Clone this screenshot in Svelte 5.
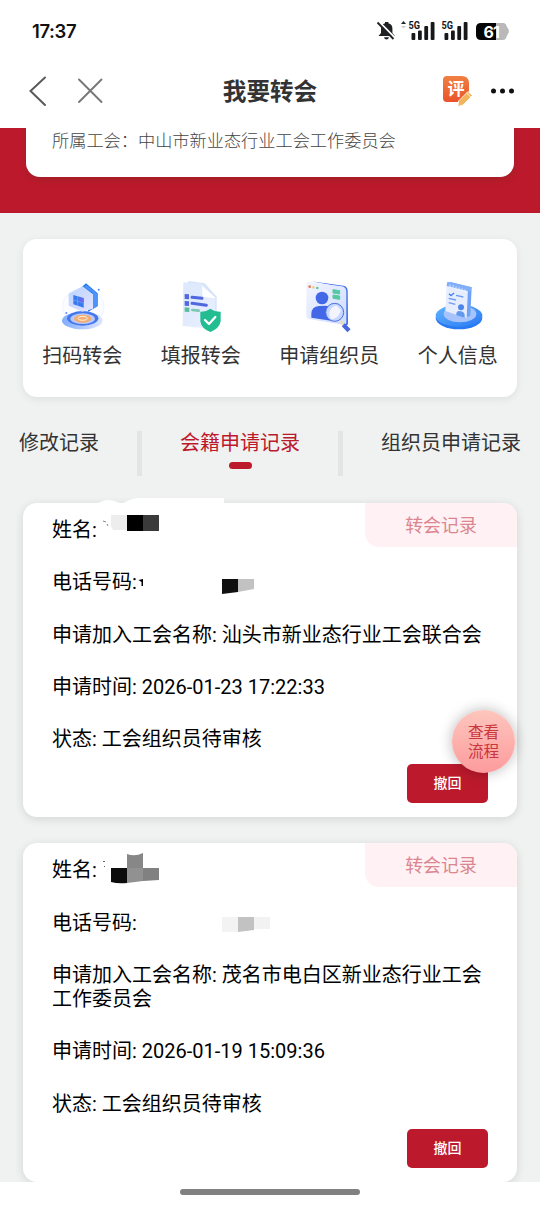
<script lang="ts">
	interface Field {
		label: string;
		value: string;
	}

	interface TransferRecord {
		id: number;
		fields: Field[];
	}

	const tabs = ['修改记录', '会籍申请记录', '组织员申请记录'];
	let activeTab = $state(1);

	const records: TransferRecord[] = [
		{
			id: 1,
			fields: [
				{ label: '姓名', value: '' },
				{ label: '电话号码', value: '' },
				{ label: '申请加入工会名称', value: '汕头市新业态行业工会联合会' },
				{ label: '申请时间', value: '2026-01-23 17:22:33' },
				{ label: '状态', value: '工会组织员待审核' }
			]
		},
		{
			id: 2,
			fields: [
				{ label: '姓名', value: '' },
				{ label: '电话号码', value: '' },
				{ label: '申请加入工会名称', value: '茂名市电白区新业态行业工会工作委员会' },
				{ label: '申请时间', value: '2026-01-19 15:09:36' },
				{ label: '状态', value: '工会组织员待审核' }
			]
		}
	];
</script>

<div class="screen">
	<header>
		<div class="status-bar">
			<span class="clock">17:37</span>
			<!-- mute, signal x2, battery -->
			<svg class="status-icons" width="136" height="24" viewBox="0 0 136 24">
				<path d="M2.500 17 5 14V9.500a5.500 5.500 0 0 1 4-5.200V3h3.400v1.300a5.500 5.500 0 0 1 4 5.200V14l2.500 3z" fill="#202124" />
				<path d="M8 18.300h5q-.5 2.200-2.500 2.200T8 18.300z" fill="#202124" />
				<path d="M2.500 2.300 18.800 18.800" stroke="#fff" stroke-width="2" />
				<path d="M1.500 3.500 17.500 20" stroke="#202124" stroke-width="1.800" />
				<path d="m25 5 2.500-3 2.500 3z" fill="#202124" />
				<path d="m25 7 2.500 2.500L30 7z" fill="#ccc" />
				<g fill="#17181a">
					<rect x="35.500" y="14" width="3.800" height="7" rx="1" />
					<rect x="42" y="11.500" width="3.800" height="9.500" rx="1" />
					<rect x="48.300" y="7" width="3.800" height="14" rx="1" />
					<rect x="54.700" y="3" width="3.800" height="18" rx="1" />
					<rect x="68.500" y="14" width="3.800" height="7" rx="1" />
					<rect x="75" y="11.500" width="3.800" height="9.500" rx="1" />
					<rect x="81.300" y="7" width="3.800" height="14" rx="1" />
					<rect x="87.700" y="3" width="3.800" height="18" rx="1" />
				</g>
				<g class="network">
					<text x="32.500" y="10" textLength="11.500" lengthAdjust="spacingAndGlyphs">5G</text>
					<text x="65.500" y="10" textLength="11.500" lengthAdjust="spacingAndGlyphs">5G</text>
				</g>
				<path d="M120 4h6.500q3.500 0 4 3.500l2 3v3l-2 3q-.5 3.500-4 3.500H120z" fill="#b9b9b9" />
				<path d="M105 4h15v17h-15q-5 0-5-5V9q0-5 5-5z" fill="#050505" />
				<path d="M120 4h6.500q3.500 0 4 3.500l2 3v3l-2 4q-.5 3.500-4 3.500H120z" fill="#b9b9b9" />
				<text class="charge" x="107.500" y="18.500">61</text>
			</svg>
		</div>
		<div class="nav-bar">
			<svg width="90" height="36" viewBox="0 0 90 36" fill="none" stroke-linecap="round">
				<path d="M25 4.500 10.500 18l14.500 14" stroke="#5a5a5a" stroke-width="2" />
				<path d="m59 6.500 22.500 22.500M81.500 6.500 59 29" stroke="#777" stroke-width="1.900" />
			</svg>
			<h1>我要转会</h1>
			<svg width="90" height="36" viewBox="0 0 90 36">
				<defs>
					<linearGradient id="rate" x1="0" y1="0" x2="0" y2="1">
						<stop offset="0" stop-color="#f08143" />
						<stop offset="1" stop-color="#eb512c" />
					</linearGradient>
				</defs>
				<path d="M16 3h15q6 0 7 6v12.500q0 7.500-7.500 7.500H16q-4 0-4-4V7q0-4 4-4z" fill="url(#rate)" />
				<text class="rate-glyph" x="16.500" y="21.500">评</text>
				<path d="m27.500 28 9.500-9.500 4.500 4-9.500 9.500-5 1.500z" fill="#f3b55b" stroke="#fff" stroke-width=".8" />
				<path d="m35.500 20 4.500 4" stroke="#fff3d5" stroke-width="1" />
				<g fill="#111">
					<circle cx="62.500" cy="18" r="2.500" />
					<circle cx="71.500" cy="18" r="2.500" />
					<circle cx="80.500" cy="18" r="2.500" />
				</g>
			</svg>
		</div>
	</header>

	<section class="banner">
		<div class="member-card">所属工会：中山市新业态行业工会工作委员会</div>
	</section>

	<main>
		<nav class="actions">
			<div class="action">
				<svg width="52" height="52" viewBox="78 48 156 156">
					<defs>
						<linearGradient id="disc" x1="0" x2="1">
							<stop offset="0" stop-color="#80adff" />
							<stop offset="1" stop-color="#dfe5ff" />
						</linearGradient>
						<linearGradient id="wall" x1="0" y1="0" x2="1" y2="1">
							<stop offset="0" stop-color="#b9d3ff" />
							<stop offset="1" stop-color="#e4e2ff" />
						</linearGradient>
					</defs>
					<ellipse cx="160" cy="125" rx="62" ry="55" fill="#fbfcff" stroke="#e7eeff" stroke-width="2" />
					<ellipse cx="157" cy="167" rx="61" ry="26" fill="url(#disc)" />
					<ellipse cx="158" cy="160" rx="47" ry="22" fill="#4377ee" />
					<ellipse cx="158" cy="161" rx="37" ry="16" fill="#b9c8fa" />
					<ellipse cx="158" cy="161" rx="26" ry="12" fill="#f2ae72" />
					<ellipse cx="158" cy="160" rx="14" ry="6" fill="none" stroke="#fff0dd" stroke-width="3" />
					<path d="m155 66 13-11 35 30v38l-28 17z" fill="#2979ee" />
					<path d="m170 61 33 26v36l-14 9V84l-26-19z" fill="#4c94f8" />
					<path d="m116 86 42-22 31 24v43l-32 9-41-18z" fill="url(#wall)" />
					<path d="m130 90 31 9v29l-31-10z" fill="#3979ee" />
					<path d="m143 94v29M130 105l31 9" stroke="#7daefa" stroke-width="2" />
					<path d="m148 97 13 4v12l-13-4z" fill="#6d69ed" />
					<circle cx="206" cy="74" r="3" fill="#4c8bf9" />
					<circle cx="109" cy="144" r="3" fill="#6c86fa" />
				</svg>
				<span>扫码转会</span>
			</div>
			<div class="action">
				<svg width="52" height="52" viewBox="435 48 156 156">
					<defs>
						<linearGradient id="sheet" x1="0" y1="0" x2="1" y2="1">
							<stop offset="0" stop-color="#dce8fc" />
							<stop offset="1" stop-color="#e9efff" />
						</linearGradient>
					</defs>
					<path d="m474 48 50 7 36 40v65l-86 20z" fill="#d4e3fa" />
					<path d="m460 52 56 4 40 43v93l-98-9z" fill="url(#sheet)" />
					<path d="m516 62 1 25q0 8 8 9l33 4z" fill="#fff" />
					<path d="m464 87 13 1v15l-13-1zm0 21 13 1v14l-13-1z" fill="#5369dc" />
					<path d="m464 127 14 1v13l-14-1z" fill="#58bd9d" />
					<path d="m486 97 30 3m-30 15 43 6" stroke="#5067df" stroke-width="9" stroke-linecap="round" />
					<path d="m487 135 19 2" stroke="#79c8ae" stroke-width="8" stroke-linecap="round" />
					<path d="M541 131q13 10 31 9v29q-4 22-31 32-27-10-30-32v-29q17 1 30-9z" fill="#22bd91" />
					<path d="m525 165 12 12 19-21" fill="none" stroke="#fff" stroke-width="7" stroke-linecap="round" stroke-linejoin="round" />
				</svg>
				<span>填报转会</span>
			</div>
			<div class="action">
				<svg width="52" height="52" viewBox="100 48 156 156">
					<defs>
						<linearGradient id="window" x1="0" y1="0" x2="1" y2="1">
							<stop offset="0" stop-color="#f3f4ff" />
							<stop offset="1" stop-color="#ccddff" />
						</linearGradient>
					</defs>
					<path d="m124 49 97 13q13 2 13 16l1 95q0 11-10 7l-10-4V66z" fill="#426ce9" />
					<path d="m116 51 100 13q13 2 14 15v94q0 8-9 6l-100-16q-11-2-11-12V58q0-8 6-7z" fill="url(#window)" />
					<circle cx="120" cy="65" r="4" fill="#e87958" />
					<circle cx="131" cy="67" r="4" fill="#f4ce84" />
					<circle cx="143" cy="69" r="4" fill="#62c5a2" />
					<circle cx="157" cy="99" r="19" fill="#4267e7" />
					<path d="M125 158v-11q0-22 23-24l21-1q20 3 20 22v24z" fill="#4267e7" />
					<path d="m190 74 20 3v10l-20-3zm0 16 20 3v10l-20-3z" fill="#55c8a1" stroke="#55c8a1" stroke-width="3" stroke-linejoin="round" />
					<circle cx="195" cy="142" r="27" fill="#c7d8ff" stroke="#4a6ce9" stroke-width="3" />
					<path d="M180 155q-5-25 20-34l14 14q-8 27-29 27z" fill="#f3f4ff" />
					<path d="m213 168 9 11" stroke="#eadbb0" stroke-width="8" />
					<path d="m221 179 17 18" stroke="#4867dd" stroke-width="13" />
				</svg>
				<span>申请组织员</span>
			</div>
			<div class="action">
				<svg width="52" height="52" viewBox="484 48 156 156">
					<defs>
						<linearGradient id="base" x1="0" y1="0" x2="1" y2="1">
							<stop offset="0" stop-color="#63b6ff" />
							<stop offset="1" stop-color="#2a78f4" />
						</linearGradient>
					</defs>
					<ellipse cx="565" cy="158" rx="70" ry="35" fill="#287af3" />
					<ellipse cx="565" cy="152" rx="70" ry="33" fill="url(#base)" />
					<ellipse cx="568" cy="147" rx="49" ry="25" fill="#a6c4fb" />
					<path d="m537 50 66 17-4 85-17 8z" fill="#6ea2f5" />
					<path d="m528 54 64 16-4 90-64-22z" fill="#e5edff" />
					<path d="m530 50 73 17-4 13-71-17z" fill="#82affa" />
					<path d="m538 59v10m9-8v10m9-7v10m9-7v10m9-7v10m9-7v10" stroke="#fff" stroke-width="2" />
					<path d="m535 86 6 6 9-8" fill="none" stroke="#3e7eea" stroke-width="4" />
					<path d="m556 91 22 5m-44 4 22 5m-22 8 20 5" stroke="#6b9cf3" stroke-width="4" />
					<circle cx="571" cy="127" r="9" fill="#4d85e9" />
					<path d="M557 151v-7q2-8 14-5 11 3 11 11v8z" fill="#6398ef" />
				</svg>
				<span>个人信息</span>
			</div>
		</nav>

		<div class="tabs">
			{#each tabs as tab, i}
				{#if i > 0}
					<i class="tab-divider"></i>
				{/if}
				<button
					type="button"
					class="tab"
					class:active={i === activeTab}
					onclick={() => (activeTab = i)}
				>
					{tab}
				</button>
			{/each}
		</div>

		{#each records as record (record.id)}
			<article class="record">
				<span class="record-tag">转会记录</span>
				{#each record.fields as field}
					<p>{field.label}: {field.value}</p>
				{/each}
				<div class="record-footer">
					<button type="button" class="revoke">撤回</button>
				</div>
				<!-- personal data stays masked -->
				{#if record.id === 1}
					<svg class="mask" width="260" height="100" viewBox="0 -6 260 100">
						<path d="M74 1q10-7 20-2l5 2q7-5 16-6h86v8H74z" fill="#fff" />
						<path d="m80 18 3 1m1 2 1 2" stroke="#888" />
						<path d="M88 12h16v15H90l-2-4z" fill="#ededed" />
						<rect x="104" y="12" width="16" height="16" />
						<rect x="120" y="12" width="16" height="16" fill="#3a3a3a" />
						<path d="m115.500 77 4.500-1v7h-1.500v-4z" />
						<path d="M199 76h16v13l-16 2z" fill="#101010" />
						<path d="M215 76h16v10l-16 3z" fill="#c2c2c2" />
					</svg>
				{:else}
					<svg class="mask" width="260" height="100" viewBox="0 -6 260 100">
						<path d="M80 18.500h2m-1 5h1" stroke="#666" />
						<path d="M104 11q8 3 16-1v15h-16z" fill="#878787" />
						<path d="M88 25h16v15q-9 1-16-1z" fill="#0c0c0c" />
						<path d="M104 25h16v13l-16 2z" fill="#919191" />
						<path d="M120 25h16v12l-16 1z" fill="#818181" />
						<path d="M199 74h16v15h-16z" fill="#f3f3f3" />
						<path d="M215 74h16v13l-16 2z" fill="#c2c2c2" />
						<path d="M231 74h16v12h-16z" fill="#f2f2f2" />
					</svg>
				{/if}
			</article>
		{/each}
	</main>

	<button type="button" class="process">查看<br />流程</button>

	<footer><i></i></footer>
</div>

<style>
	:global(body) {
		background: #fff;
	}

	.screen {
		position: relative;
		display: flex;
		flex-direction: column;
		width: 540px;
		height: 1206px;
		overflow: hidden;
		font-family: Roboto, 'Noto Sans CJK SC', sans-serif;
		color: #111;
	}

	button {
		padding: 0;
		border: 0;
		background: none;
		font-family: inherit;
	}

	header {
		box-sizing: border-box;
		flex-shrink: 0;
		height: 128px;
		padding-top: 19px;
		background: #fff;
	}

	.status-bar {
		display: flex;
		align-items: center;
		justify-content: space-between;
		height: 24px;
		padding: 0 29px 0 32px;
	}

	.clock {
		font-family: Inter, sans-serif;
		font-size: 18.5px;
		font-weight: 600;
		letter-spacing: -0.4px;
	}

	.status-icons {
		margin-right: -1px;
	}

	.network text {
		font: 700 10.5px Roboto, sans-serif;
		fill: #17181a;
	}

	.charge {
		font: 700 16px Inter, sans-serif;
		letter-spacing: -1px;
		fill: #fff;
	}

	.rate-glyph {
		font: 700 17px 'Noto Sans CJK SC', sans-serif;
		fill: #fff;
	}

	.nav-bar {
		display: flex;
		align-items: center;
		justify-content: space-between;
		height: 36px;
		margin-top: 30px;
		padding: 0 19px 0 20px;
	}

	h1 {
		margin: 2px 1px 0 0;
		font-size: 23.6px;
		font-weight: 700;
		line-height: 36px;
		color: #333;
	}

	.banner {
		flex-shrink: 0;
		height: 85px;
		overflow: hidden;
		background: #bc1a2c;
	}

	.member-card {
		box-sizing: border-box;
		height: 49px;
		margin: 0 26px;
		padding-left: 26px;
		border-radius: 0 0 14px 14px;
		background: #fff;
		box-shadow: 0 2px 6px rgba(80, 50, 20, 0.25);
		font-size: 17.2px;
		font-weight: 300;
		line-height: 26px;
		color: #444;
	}

	main {
		box-sizing: border-box;
		flex-shrink: 0;
		height: 969px;
		padding: 26px 23px 0;
		overflow: hidden;
		background: #f0f2f1;
	}

	.actions {
		box-sizing: border-box;
		display: flex;
		justify-content: space-around;
		height: 158px;
		padding-top: 42px;
		border-radius: 14px;
		background: #fff;
		box-shadow: 0 2px 9px rgba(0, 0, 0, 0.08);
	}

	.action {
		display: flex;
		flex-direction: column;
		align-items: center;
		gap: 8px;
		font-size: 20px;
		line-height: 30px;
		color: #333;
	}

	.tabs {
		display: flex;
		gap: 38px;
		height: 45px;
		margin: 34px -23px 27px;
		padding-left: 19px;
	}

	.tab {
		position: relative;
		flex-shrink: 0;
		height: 24px;
		font-size: 20px;
		line-height: 24px;
		white-space: nowrap;
		color: #333;
	}

	.tab.active {
		color: #bc1a2c;
	}

	.tab.active::after {
		content: '';
		position: absolute;
		left: calc(50% - 11px);
		top: 31px;
		width: 23px;
		height: 7px;
		border-radius: 4px;
		background: #bc1a2c;
	}

	.tab-divider {
		flex-shrink: 0;
		width: 5px;
		background: #e3e5e5;
	}

	.record {
		box-sizing: border-box;
		position: relative;
		margin-bottom: 26px;
		padding: 15px 29px 14px;
		border-radius: 14px;
		background: #fff;
		box-shadow: 0 2px 10px rgba(0, 0, 0, 0.12);
	}

	.record p {
		margin: 0 0 28.3px;
		font-size: 20px;
		line-height: 24px;
		color: #000;
	}

	.record-tag {
		position: absolute;
		right: 0;
		top: 0;
		width: 152px;
		height: 44px;
		border-radius: 0 14px 0 14px;
		background: #fff1f4;
		font-size: 17.9px;
		line-height: 45px;
		text-align: center;
		color: #db858e;
	}

	.mask {
		position: absolute;
		left: 0;
		top: -6px;
	}

	.record-footer {
		display: flex;
		justify-content: flex-end;
		margin-top: -15px;
	}

	.revoke {
		width: 81px;
		height: 39px;
		border-radius: 5px;
		background: #bc1a2c;
		font-size: 14px;
		font-weight: 500;
		line-height: 39px;
		color: #fff;
	}

	.process {
		position: absolute;
		left: 452px;
		top: 710px;
		width: 63px;
		height: 63px;
		padding-top: 2px;
		border-radius: 50%;
		background: linear-gradient(#fdc6bd, #fd9b9d);
		box-shadow: 0 0 14px rgba(0, 0, 0, 0.28);
		font-size: 15.6px;
		line-height: 19px;
		color: #c8373c;
	}

	footer {
		box-sizing: border-box;
		display: flex;
		justify-content: center;
		height: 24px;
		padding-top: 7px;
		background: #fff;
	}

	footer i {
		width: 180px;
		height: 6px;
		border-radius: 4px;
		background: #808080;
	}
</style>
